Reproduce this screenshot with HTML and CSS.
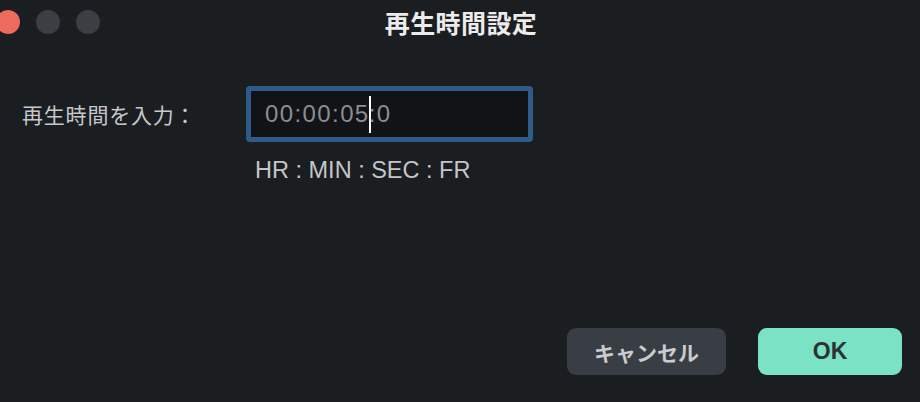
FILE: index.html
```html
<!DOCTYPE html>
<html lang="ja">

<head>
  <meta charset="utf-8">
  <link rel="stylesheet" href="styles.css">
</head>

<body>
  <div class="dialog">
    <div class="titleBar">
      <div class="lights">
        <span class="light red"></span>
        <span class="light"></span>
        <span class="light"></span>
      </div>
      <h1 class="title">再生時間設定</h1>
      <div></div>
    </div>

    <div class="formRow">
      <label class="label">再生時間を入力：</label>
      <div class="field">
        <div class="timeBox">00:00:05<span class="caret"></span>:0</div>
        <div class="hint">HR : MIN : SEC : FR</div>
      </div>
    </div>

    <div class="footer">
      <button class="btn cancel">キャンセル</button>
      <button class="btn ok">OK</button>
    </div>
  </div>
</body>

</html>
```

FILE: styles.css
```css
body {
  margin: 0;
  padding: 0;
  background: #1b1e21;
  font-family: "Liberation Sans", "Noto Sans CJK JP", sans-serif;
  overflow: hidden;
}

.dialog {
  width: 920px;
  height: 402px;
  display: flex;
  flex-direction: column;
}

.titleBar {
  height: 44px;
  display: grid;
  grid-template-columns: 1fr auto 1fr;
  align-items: center;
}

.lights {
  display: flex;
  gap: 16px;
  margin-left: -4px;
  margin-top: -1px;
}

.light {
  width: 24px;
  height: 24px;
  border-radius: 50%;
  background: #3b3f44;
}

.light.red {
  background: #ec6a5e;
}

.title {
  margin: 0;
  padding-left: 2px;
  font-family: "Noto Sans CJK JP", sans-serif;
  font-size: 25px;
  letter-spacing: 0.4px;
  font-weight: 700;
  color: #ececec;
  line-height: 30px;
}

.formRow {
  display: flex;
  align-items: flex-start;
  padding-left: 22px;
  margin-top: 42px;
}

.label {
  width: 224px;
  height: 56px;
  display: flex;
  align-items: center;
  font-family: "Noto Sans CJK JP", sans-serif;
  font-size: 21px;
  letter-spacing: 0.8px;
  color: #c6c8ca;
}

.timeBox {
  width: 263px;
  height: 46px;
  border: 5px solid #2f5b88;
  border-radius: 4px;
  background: #111316;
  padding-left: 14px;
  display: flex;
  align-items: center;
  font-size: 24px;
  letter-spacing: 1.4px;
  color: #8b8e91;
}

.caret {
  display: inline-block;
  width: 2px;
  height: 37px;
  margin: 0 -2px 0 -1px;
  background: #ffffff;
}

.hint {
  margin-top: 14px;
  padding-left: 9px;
  font-size: 23.5px;
  color: #c3c5c8;
  line-height: 28px;
}

.footer {
  margin-top: auto;
  display: flex;
  justify-content: flex-end;
  gap: 32px;
  padding: 0 18px 27px 0;
}

.btn {
  height: 47px;
  border: none;
  outline: none;
  border-radius: 9px;
  font-family: "Liberation Sans", "Noto Sans CJK JP", sans-serif;
  font-size: 21px;
  font-weight: 700;
}

.cancel {
  width: 159px;
  background: #393d44;
  color: #c9cbce;
}

.ok {
  width: 144px;
  background: #7be2c5;
  color: #2d3236;
  font-size: 23px;
}
```
